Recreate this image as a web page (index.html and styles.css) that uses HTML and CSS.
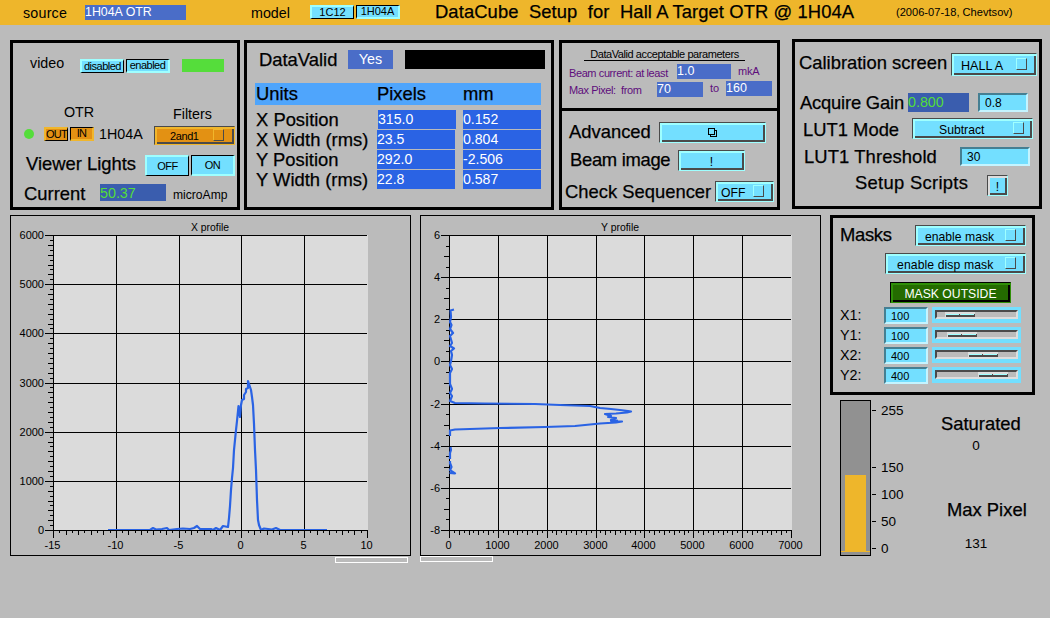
FILE: index.html
```
<!DOCTYPE html>
<html lang="en">
<head>
    <meta charset="UTF-8">
    <title>DataCube Setup</title>
    <link rel="stylesheet" href="styles.css">
</head>
<body>

<header class="topbar">
    <span class="text source-label">source</span>
    <span class="source-field">1H04A OTR</span>
    <span class="text model-label">model</span>
    <div class="toggle model-toggle">
        <button class="up">1C12</button>
        <button class="down">1H04A</button>
    </div>
    <h1 class="title">DataCube  Setup  for  Hall A Target OTR @ 1H04A</h1>
    <span class="version">(2006-07-18, Chevtsov)</span>
</header>

<div class="top-panels">
    <!-- Video / OTR -->
    <section class="panel video-panel">
        <div class="row video-row">
            <span class="text video-label">video</span>
            <div class="toggle video-toggle">
                <button class="up">disabled</button>
                <button class="down">enabled</button>
            </div>
            <span class="video-status"></span>
        </div>
        <div class="row heads-row">
            <span class="text otr-label">OTR</span>
            <span class="text filters-label">Filters</span>
        </div>
        <div class="row otr-row">
            <span class="dot"></span>
            <div class="toggle orange otr-toggle">
                <button class="up">OUT</button>
                <button class="down">IN</button>
            </div>
            <span class="text otr-name">1H04A</span>
            <button class="menu orange filter-menu"><span>2and1</span><i></i></button>
        </div>
        <div class="row lights-row">
            <span class="big lights-label">Viewer Lights</span>
            <div class="toggle lights-toggle">
                <button class="up">OFF</button>
                <button class="down">ON</button>
            </div>
        </div>
        <div class="row current-row">
            <span class="big current-label">Current</span>
            <span class="readback current-value">50.37</span>
            <span class="unit">microAmp</span>
        </div>
    </section>

    <!-- Measured values -->
    <section class="panel data-panel">
        <div class="row valid-row">
            <span class="big valid-label">DataValid</span>
            <span class="valid-value">Yes</span>
            <span class="valid-message"></span>
        </div>
        <div class="table-head">
            <span class="big">Units</span>
            <span class="big">Pixels</span>
            <span class="big">mm</span>
        </div>
        <div class="table-body">
            <span class="big">X Position</span><b class="first">315.0</b><b>0.152</b>
            <span class="big">X Width (rms)</span><b>23.5</b><b>0.804</b>
            <span class="big">Y Position</span><b>292.0</b><b>-2.506</b>
            <span class="big">Y Width (rms)</span><b>22.8</b><b>0.587</b>
        </div>
    </section>

    <!-- Parameters and actions -->
    <section class="panel params-panel">
        <div class="params">
            <h2>DataValid acceptable parameters</h2>
            <div class="row param-row">
                <span class="param beam-current">Beam current: at least</span>
                <span class="limit limit-current">1.0</span>
                <span class="param mka">mkA</span>
            </div>
            <div class="row param-row">
                <span class="param max-pixel">Max Pixel:&nbsp; from</span>
                <span class="limit limit-from">70</span>
                <span class="param to">to</span>
                <span class="limit limit-to">160</span>
            </div>
        </div>
        <div class="actions">
            <div class="row advanced-row">
                <span class="big advanced-label">Advanced</span>
                <button class="menu advanced-button">
                    <svg width="10" height="10" viewBox="0 0 10 10"><path d="M.5.5h6v6h-6zM6.5 2.5h2v6h-6v-2"/></svg>
                </button>
            </div>
            <div class="row beam-row">
                <span class="big beam-label">Beam image</span>
                <button class="menu beam-button">!</button>
            </div>
            <div class="row check-row">
                <span class="big check-label">Check Sequencer</span>
                <button class="menu check-menu"><span>OFF</span><i></i></button>
            </div>
        </div>
    </section>

    <!-- Calibration -->
    <section class="panel calib-panel">
        <div class="row screen-row">
            <span class="big screen-label">Calibration screen</span>
            <button class="menu screen-menu"><span>HALL A</span><i></i></button>
        </div>
        <div class="row gain-row">
            <span class="big gain-label">Acquire Gain</span>
            <span class="readback gain-value">0.800</span>
            <input class="gain-input" type="text" value="0.8">
        </div>
        <div class="row mode-row">
            <span class="big mode-label">LUT1 Mode</span>
            <button class="menu mode-menu"><span>Subtract</span><i></i></button>
        </div>
        <div class="row threshold-row">
            <span class="big threshold-label">LUT1 Threshold</span>
            <input class="threshold-input" type="text" value="30">
        </div>
        <div class="row scripts-row">
            <span class="big scripts-label">Setup Scripts</span>
            <button class="menu scripts-button">!</button>
        </div>
    </section>
</div>

<div class="bottom-panels">
    <div class="chart-column">
        <svg class="chart" id="xProfile" width="401" height="341" viewBox="10 215 401 341"></svg>
        <div class="strip strip-right"></div>
    </div>
    <div class="chart-column">
        <svg class="chart" id="yProfile" width="401" height="341" viewBox="420 215 401 341"></svg>
        <div class="strip"></div>
    </div>

    <div class="side">
        <!-- Masks -->
        <section class="panel mask-panel">
            <div class="row mask-row">
                <span class="big mask-label">Masks</span>
                <button class="menu mask-menu"><span>enable mask</span><i></i></button>
            </div>
            <button class="menu disp-menu"><span>enable disp mask</span><i></i></button>
            <button class="menu outside-button">MASK OUTSIDE</button>
            <div class="row slider-row">
                <span class="text">X1:</span>
                <input type="text" value="100">
                <svg class="slider" width="89" height="16" data-pos="13"></svg>
            </div>
            <div class="row slider-row">
                <span class="text">Y1:</span>
                <input type="text" value="100">
                <svg class="slider" width="89" height="16" data-pos="15"></svg>
            </div>
            <div class="row slider-row">
                <span class="text">X2:</span>
                <input type="text" value="400">
                <svg class="slider" width="89" height="16" data-pos="36"></svg>
            </div>
            <div class="row slider-row">
                <span class="text">Y2:</span>
                <input type="text" value="400">
                <svg class="slider" width="89" height="16" data-pos="46"></svg>
            </div>
        </section>

        <!-- Pixel level -->
        <div class="levels">
            <svg class="gauge" width="70" height="156" viewBox="0 0 70 156">
                <rect class="gauge-box" x=".5" y=".5" width="30" height="155"/>
                <rect class="gauge-fill" x="5" y="75" width="21" height="77"/>
                <rect class="gauge-fill" x="1" y="151" width="29" height="1"/>
                <path class="line" d="M32 10.5h4M32 67.5h4M32 94.5h4M32 121.5h4M32 148.5h4"/>
                <text x="41" y="15">255</text>
                <text x="41" y="72">150</text>
                <text x="41" y="99">100</text>
                <text x="41" y="126">50</text>
                <text x="41" y="153">0</text>
            </svg>
            <div class="counts">
                <span class="big saturated">Saturated</span>
                <span class="count">0</span>
                <span class="big max">Max Pixel</span>
                <span class="count">131</span>
            </div>
        </div>
    </div>
</div>

<script src="charts.js"></script>
</body>
</html>
```

FILE: styles.css
```
* {
    box-sizing: border-box;
}

body {
    margin: 0;
    width: 1050px;
    height: 618px;
    overflow: hidden;
    background: #bbbbbb;
    color: #000;
    font-family: "Liberation Sans", Arial, sans-serif;
}

button,
input {
    font-family: inherit;
    color: #000;
    margin: 0;
    padding: 0;
    flex: none;
}

span, b, h1, h2, svg {
    display: block;
    flex: none;
    white-space: pre;
}

.text {
    font-size: 14.3px;
    line-height: 16px;
}

.big {
    font-size: 18.4px;
    line-height: 20px;
    -webkit-text-stroke: 0.25px #000;
}

.row {
    display: flex;
    align-items: flex-start;
}

/* Header */
.topbar {
    display: flex;
    align-items: flex-start;
    height: 25px;
    background: #eeb62b;
}

.source-label {
    width: 62px;
    margin: 5px 0 0 23px;
    letter-spacing: 0.2px;
}

.source-field {
    width: 101px;
    height: 15px;
    margin-top: 5px;
    background: #4a6dc8;
    color: #fff;
    font-size: 12.4px;
    line-height: 15px;
}

.model-label {
    width: 59px;
    margin: 5px 0 0 65px;
}

.model-toggle {
    margin-top: 5px;
}

.title {
    width: 461px;
    margin: 2px 0 0 35px;
    font-size: 18.4px;
    font-weight: normal;
    letter-spacing: 0.09px;
    line-height: 20px;
    -webkit-text-stroke: 0.25px #000;
}

.version {
    margin-top: 6px;
    font-size: 11.1px;
    line-height: 13px;
}

/* Controls */
.toggle {
    display: flex;
    flex: none;
    gap: 2px;
}

.toggle button {
    width: 44px;
    height: 14px;
    border: solid #9fffff;
    background: #73dfff;
    font-size: 11px;
    line-height: 11px;
    white-space: nowrap;
}

.toggle .up {
    border-width: 2px 1px 1px 2px;
    border-right-color: #000;
    border-bottom-color: #000;
}

.toggle .down {
    border-width: 1px 2px 2px 1px;
    border-top-color: #000;
    border-left-color: #000;
}

.toggle.orange button {
    border-color: #f0b62c;
    background: #e39113;
}

.toggle.orange .up {
    border-right-color: #000;
    border-bottom-color: #000;
}

.toggle.orange .down {
    border-top-color: #000;
    border-left-color: #000;
}

.menu {
    display: flex;
    align-items: center;
    justify-content: center;
    border: 1px solid;
    border-color: #4a4a4a #9fffff #9fffff #4a4a4a;
    box-shadow: inset 2px 2px 0 #9fffff, inset -2px -2px 0 #4a4a4a;
    background: #73dfff;
    font-size: 12.2px;
    line-height: 14px;
    padding-top: 2px;
}

.menu i {
    width: 11px;
    height: 12px;
    margin-bottom: 3px;
    border: 1px solid;
    border-color: #9fffff #4a4a4a #4a4a4a #9fffff;
}

.menu span {
    flex: 1;
    text-align: left;
}

.menu.orange {
    border-color: #4a4a4a #f0b62c #f0b62c #4a4a4a;
    box-shadow: inset 2px 2px 0 #f0b62c, inset -2px -2px 0 #4a4a4a;
    background: #e39113;
}

.menu.orange i {
    border-color: #f0b62c #4a4a4a #4a4a4a #f0b62c;
}

input {
    height: 19px;
    border: 2px solid;
    border-color: #457f92 #c4f4ff #c4f4ff #457f92;
    border-radius: 0;
    background: #73dfff;
    font-size: 12px;
    padding-left: 5px;
}

.readback {
    background: #3a5dae;
    color: #53dd3a;
    font-size: 14.3px;
    line-height: 18px;
}

.panel {
    flex: none;
    height: 170px;
    border: 3px solid #000;
}

.top-panels {
    display: flex;
    height: 175px;
    padding: 15px 0 0 10px;
}

/* Video panel */
.video-panel {
    width: 230px;
}

.video-row {
    height: 60px;
    padding: 12px 0 0 17px;
}

.video-label {
    width: 50px;
}

.video-toggle {
    margin-top: 4px;
}

.video-toggle button {
    letter-spacing: -0.5px;
}

.video-status {
    width: 42px;
    height: 13px;
    margin: 4px 0 0 12px;
    background: #55dd3b;
}

.heads-row {
    height: 23px;
    padding-left: 51px;
}

.otr-label {
    width: 109px;
    margin-top: 1px;
}

.filters-label {
    margin-top: 3px;
}

.otr-row {
    height: 28px;
    padding-left: 11px;
}

.dot {
    width: 10px;
    height: 10px;
    margin: 3px 10px 0 0;
    border-radius: 50%;
    background: #55dd3b;
}

.otr-toggle {
    margin-top: 1px;
}

.otr-toggle button {
    width: 24px;
    font-size: 11px;
    letter-spacing: -0.7px;
}

.otr-name {
    width: 55px;
    margin-left: 5px;
}

.filter-menu {
    width: 81px;
    height: 19px;
    padding: 1px 10px 0 15px;
    font-size: 11px;
    letter-spacing: -0.4px;
}

.lights-row {
    height: 30px;
    padding-left: 13px;
}

.lights-label {
    width: 119px;
}

.lights-toggle {
    margin-top: 1px;
}

.lights-toggle button {
    height: 21px;
    font-size: 11px;
    letter-spacing: -0.5px;
}

.current-row {
    padding-left: 11px;
}

.current-label {
    width: 76px;
}

.current-value {
    width: 66px;
    height: 17px;
}

.unit {
    margin: 4px 0 0 7px;
    font-size: 12.1px;
    line-height: 14px;
}

/* Data panel */
.data-panel {
    width: 310px;
    margin-left: 4px;
}

.valid-row {
    height: 40px;
    padding: 7px 0 0 12px;
}

.valid-label {
    width: 89px;
}

.valid-value {
    width: 45px;
    height: 19px;
    background: #4a6dc8;
    color: #fff;
    font-size: 14.3px;
    line-height: 18px;
    text-align: center;
}

.valid-message {
    width: 140px;
    height: 19px;
    margin-left: 12px;
    background: #000;
}

.table-head {
    display: grid;
    grid-template-columns: 121px 86px 78px;
    width: 286px;
    height: 22px;
    margin-left: 8px;
    padding: 1px 0 0 1px;
    background: #4fa5fc;
}

.table-body {
    display: grid;
    grid-template-columns: 121px 78px 78px;
    grid-auto-rows: 19px;
    row-gap: 1px;
    justify-content: start;
    margin: 5px 0 0 9px;
}

.table-body .big {
    line-height: 19px;
}

.table-body b {
    width: 78px;
    background: #2a63e4;
    color: #fff;
    font-size: 14.1px;
    font-weight: normal;
    line-height: 19px;
}

.table-body b + b {
    margin-left: 8px;
}

.table-body .first {
    margin-left: 1px;
}

/* Parameters panel */
.params-panel {
    width: 221px;
    margin-left: 5px;
}

.params {
    height: 68px;
    border-bottom: 3px solid #000;
}

.params h2 {
    width: 161px;
    height: 18px;
    margin: 0 0 0 22px;
    border-bottom: 1px solid #000;
    font-size: 11px;
    font-weight: normal;
    letter-spacing: -0.43px;
    line-height: 23px;
    text-align: center;
}

.param-row {
    height: 17px;
    padding: 3px 0 0 7px;
}

.param {
    color: #5e0d7c;
    font-size: 11px;
    letter-spacing: -0.4px;
    line-height: 14px;
    margin-top: 2px;
}

.beam-current {
    width: 108px;
}

.max-pixel {
    width: 88px;
}

.mka {
    margin: 0 0 0 7px;
    letter-spacing: -0.2px;
}

.to {
    width: 23px;
    margin: 0;
    padding-left: 7px;
    letter-spacing: 0;
}

.limit {
    width: 46px;
    height: 15px;
    background: #4a6dc8;
    color: #fff;
    font-size: 12.5px;
    line-height: 14px;
}

.limit-current {
    width: 54px;
}

.limit-from {
    margin-top: 1px;
}

.advanced-row {
    height: 39px;
    padding: 11px 0 0 7px;
}

.advanced-label {
    width: 90px;
}

.advanced-button {
    width: 107px;
    height: 21px;
    padding: 0;
}

.advanced-button path {
    fill: none;
    stroke: #000;
    shape-rendering: crispEdges;
}

.beam-row {
    height: 31px;
    padding-left: 8px;
}

.beam-label {
    width: 108px;
    letter-spacing: -0.3px;
}

.beam-button {
    width: 67px;
    height: 21px;
}

.check-row {
    padding-left: 3px;
}

.check-label {
    width: 150px;
    margin-top: 1px;
}

.check-menu {
    width: 59px;
    height: 21px;
    padding: 2px 9px 0 5px;
}

/* Calibration panel */
.calib-panel {
    width: 250px;
    margin: -1px 0 0 12px;
}

.screen-row {
    height: 51px;
    padding: 11px 0 0 4px;
}

.screen-label {
    width: 152px;
}

.screen-menu {
    width: 86px;
    height: 23px;
    padding: 2px 9px 0 9px;
    font-size: 12.6px;
}

.gain-row {
    height: 25px;
    padding-left: 5px;
}

.gain-label {
    width: 108px;
    letter-spacing: -0.2px;
}

.gain-value {
    width: 61px;
    height: 19px;
}

.gain-input {
    width: 50px;
    margin-left: 9px;
}

.mode-row {
    height: 29px;
    padding-left: 8px;
}

.mode-label {
    width: 109px;
    margin-top: 2px;
}

.mode-menu {
    width: 121px;
    height: 21px;
    padding: 2px 8px 0 26px;
}

.threshold-row {
    height: 28px;
    padding-left: 9px;
}

.threshold-label {
    width: 156px;
    letter-spacing: 0.1px;
}

.threshold-input {
    width: 70px;
}

.scripts-row {
    padding-left: 60px;
}

.scripts-label {
    width: 132px;
    margin-top: -2px;
    letter-spacing: 0.3px;
}

.scripts-button {
    width: 21px;
    height: 21px;
    box-shadow: inset 2px 2px 0 #dddddd, inset -2px -2px 0 #4a4a4a;
}

/* Charts */
.bottom-panels {
    display: flex;
    padding: 0 0 0 10px;
    margin-top: 15px;
}

.chart-column {
    width: 401px;
    margin-right: 9px;
    flex: none;
}

.strip {
    width: 73px;
    height: 6px;
    border: 1px solid #fff;
}

.strip-right {
    margin: 1px 3px 0 auto;
}

.line {
    fill: none;
    stroke: #000;
    shape-rendering: crispEdges;
}

.frame {
    fill: #bbbbbb;
    stroke: #000;
}

.plot {
    fill: #dbdbdb;
}

.curve {
    fill: none;
    stroke: #2a63e4;
    stroke-width: 2.2;
    stroke-linejoin: round;
}

.chart text {
    font-size: 11px;
}

/* Masks */
.side {
    width: 220px;
    flex: none;
}

.mask-panel {
    width: 205px;
    height: 180px;
}

.mask-row {
    height: 28px;
    padding: 7px 0 0 7px;
}

.mask-label {
    width: 75px;
    letter-spacing: -0.3px;
}

.mask-menu {
    width: 111px;
    height: 21px;
    padding: 2px 9px 0 9px;
}

.disp-menu {
    width: 141px;
    height: 21px;
    margin: 7px 0 0 52px;
    padding: 2px 9px 0 11px;
    letter-spacing: 0.1px;
}

.outside-button {
    width: 121px;
    height: 21px;
    margin: 8px 0 4px 57px;
    border-color: #000 #2f8f08 #2f8f08 #000;
    box-shadow: inset 2px 2px 0 #2f8f08, inset -2px -2px 0 #000;
    background: #246b00;
    color: #fff;
}

.slider-row {
    height: 20px;
    padding-left: 7px;
}

.slider-row .text {
    width: 44px;
}

.slider-row input {
    width: 44px;
    height: 17px;
    margin-right: 4px;
    font-size: 11px;
}

/* Level gauge */
.levels {
    display: flex;
    padding: 5px 0 0 10px;
}

.gauge-box {
    fill: #919191;
    stroke: #000;
}

.gauge-fill {
    fill: #eeb62b;
}

.gauge text {
    font-size: 13.5px;
}

.counts {
    width: 130px;
    padding-top: 14px;
}

.saturated {
    margin-left: 31px;
}

.max {
    margin: 43px 0 11px 37px;
}

.count {
    width: 132px;
    font-size: 13.5px;
    line-height: 23px;
    text-align: center;
}

.max + .count {
    margin-top: 12px;
}
```

FILE: charts.js
```
const NS = 'http://www.w3.org/2000/svg';

function add(parent, tag, attrs, text) {
    const el = document.createElementNS(NS, tag);
    for (const key in attrs) {
        el.setAttribute(key, attrs[key]);
    }
    if (text !== undefined) {
        el.textContent = text;
    }
    parent.appendChild(el);
}

// size of the minor tick, half steps are shorter
function tickSize(i, perMajor) {
    if (i % perMajor === 0) {
        return 8;
    }
    return i % 2 === 0 ? 5 : 3;
}

function drawChart(id, o) {
    const svg = document.getElementById(id);
    const top = 235, bottom = 530;
    const xStep = (o.right - o.left) / (o.xLabels.length - 1);
    const yStep = (bottom - top) / (o.yLabels.length - 1);
    let d = '';

    add(svg, 'rect', {class: 'frame', x: o.frame + 0.5, y: 215.5, width: 400, height: 340});
    add(svg, 'rect', {class: 'plot', x: o.left, y: top, width: o.right - o.left + 1, height: bottom - top});
    add(svg, 'text', {x: o.frame + 200, y: 231, 'text-anchor': 'middle', textLength: 38, lengthAdjust: 'spacingAndGlyphs'}, o.title);

    o.xLabels.forEach((label, i) => {
        const x = Math.round(o.left + i * xStep) + 0.5;
        if (i < o.xLabels.length - 1) {
            d += `M${x} ${top}V${bottom}`;
        }
        add(svg, 'text', {x: x - 1, y: 549, 'text-anchor': 'middle'}, label);
    });
    o.yLabels.forEach((label, i) => {
        const y = Math.round(top + i * yStep) + 0.5;
        d += `M${o.left} ${y}H${o.right}`;
        add(svg, 'text', {x: o.left - 9, y: y + 3.5, 'text-anchor': 'end'}, label);
    });
    for (let i = 0; i <= o.xMinor * (o.xLabels.length - 1); i++) {
        const x = Math.round(o.left + i * xStep / o.xMinor) + 0.5;
        d += `M${x} ${bottom}v${tickSize(i, o.xMinor)}`;
    }
    for (let i = 0; i <= o.yMinor * (o.yLabels.length - 1); i++) {
        const y = Math.round(top + i * yStep / o.yMinor) + 0.5;
        d += `M${o.left} ${y}h${-tickSize(i, o.yMinor)}`;
    }
    add(svg, 'path', {class: 'line', d: d});
    add(svg, 'path', {class: 'curve', d: o.curve});
    add(svg, 'path', {class: 'line', d: `M${o.left} ${bottom}.5H${o.right + 1}`});
}

drawChart('xProfile', {
    title: 'X profile', frame: 10, left: 53, right: 367, xMinor: 10, yMinor: 10,
    xLabels: [-15, -10, -5, 0, 5, 10],
    yLabels: [6000, 5000, 4000, 3000, 2000, 1000, 0],
    curve: 'M108 530H150L153 528 156 529.5 162 529 167 528 169 530 177 529 183 528.5 190 529 194 528 ' +
        '197 526 200 529 211 529 213 530 216 528 220 530 223 526 228 527 229 518 230 506 231 490 232 478 ' +
        '233 468 234 450 235 440 236 430 237 421 238.5 406 240 417 241 405 242 400 244 399 244 395 ' +
        '246 392 246 389 248 388 248 381 250 387 251 390 252 397 253 405 254 424 255 450 256 470 257 500 ' +
        '258 520 259 525 261 530 264 528.5 268 529 272 529.5 276 528 280 530H327'
});

drawChart('yProfile', {
    title: 'Y profile', frame: 420, left: 449, right: 791, xMinor: 10, yMinor: 4,
    xLabels: [0, 1000, 2000, 3000, 4000, 5000, 6000, 7000],
    yLabels: [6, 4, 2, 0, -2, -4, -6, -8],
    curve: 'M454 309.5L450.5 310.5 451 317 450 322 451.5 325 450 329 453 333 450 336 452 343 450 346 ' +
        '454 348.5 451 351 452 355 451 361 450 365 452 369 450 373V384L452 389 450 393 452 396 450 401 ' +
        '455 403 484 403.5 535 404 560 405 590 406 600 408 611 409 620 410 628 411 631 411.5 627 412.5 ' +
        '616 413.5 605 414 611 416 608 417 616 418 611 420 617 420.5 611 421 622 421.5 616 422.5 600 423.5 ' +
        '590 424.5 575 426 545 427 500 428 470 429 455 429.5 450 430.5V436M450.5 447L451 450 450 453V459' +
        'M450 461V463L451.5 467 450 470 452 471.5 455 473.5 449.5 473'
});

document.querySelectorAll('.slider').forEach(svg => {
    const x = Number(svg.dataset.pos);
    add(svg, 'rect', {width: 89, height: 16, fill: '#73dfff'});
    add(svg, 'rect', {x: 3, y: 3, width: 83, height: 9, fill: '#dddddd'});
    add(svg, 'path', {d: 'M3 12V3H86L84 5H5V10Z', fill: '#4a4a4a'});
    add(svg, 'rect', {x: 5, y: 5, width: 79, height: 5, fill: '#bbbbbb'});
    add(svg, 'rect', {x: x, y: 5, width: 30, height: 5, fill: '#dddddd'});
    add(svg, 'rect', {x: x + 1, y: 7, width: 29, height: 3, fill: '#4a4a4a'});
    add(svg, 'path', {d: `M${x + 1} 7.5h13M${x + 16} 7.5h13`, stroke: '#9fffff'});
    add(svg, 'path', {d: `M${x + 15}.5 6v2`, stroke: '#dddddd'});
});
```
